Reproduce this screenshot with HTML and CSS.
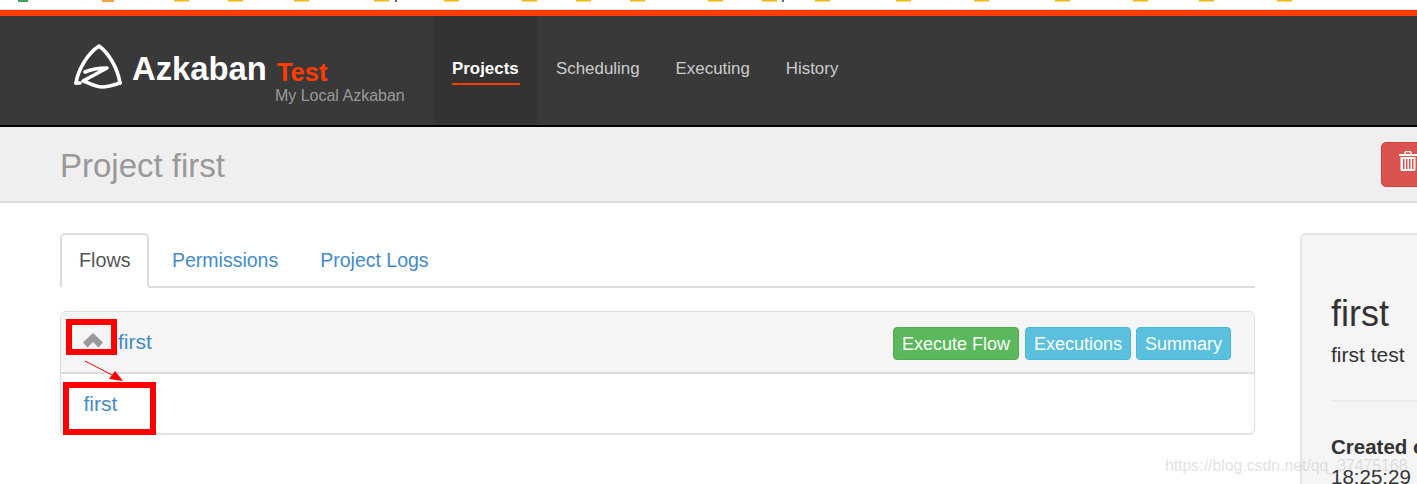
FILE: index.html
```html
<!DOCTYPE html>
<html lang="en">
<head>
<meta charset="utf-8">
<title>Project first</title>
<link rel="stylesheet" href="styles.css">
</head>
<body>
<div class="page">
  <svg class="bookmarks" width="1417" height="10" viewBox="0 0 1417 10" aria-hidden="true">
    <rect x="18" y="0" width="10" height="2" fill="#3fa35a"/>
    <rect x="102" y="0" width="12" height="2" fill="#f5a33c"/>
    <g fill="#f2b911">
      <rect x="174" width="15" height="1.5"/><rect x="228" width="15" height="1.5"/><rect x="294" width="15" height="1.5"/>
      <rect x="374" width="15" height="1.5"/><rect x="444" width="15" height="1.5"/><rect x="522" width="15" height="1.5"/>
      <rect x="576" width="15" height="1.5"/><rect x="630" width="15" height="1.5"/><rect x="708" width="15" height="1.5"/>
      <rect x="762" width="15" height="1.5"/><rect x="815" width="15" height="1.5"/><rect x="896" width="15" height="1.5"/>
      <rect x="974" width="15" height="1.5"/><rect x="1055" width="15" height="1.5"/><rect x="1133" width="15" height="1.5"/>
      <rect x="1199" width="15" height="1.5"/><rect x="1277" width="15" height="1.5"/>
    </g>
    <rect x="395" y="0" width="2" height="2" fill="#667"/>
    <rect x="782" y="0" width="2" height="2" fill="#667"/>
  </svg>

  <header class="navbar">
    <a class="brand">
      <svg class="logo" width="50" height="46" viewBox="0 0 50 46" aria-hidden="true">
        <g fill="none" stroke="#fff" stroke-width="3.600" stroke-linecap="round" stroke-linejoin="round">
          <path d="M2 40 C4 27 13 11 25 3 C36 11 44 27 46 40"/>
          <path d="M11 29 C18 26 26 25 33 25 L9 38 C16 40 20 44 28 44 C34 44 40 42 46 40"/>
          <path d="M2 40 L6 40"/>
        </g>
      </svg>
      <span class="brand-name">Azkaban</span>
      <span class="brand-env">
        <span class="env-name">Test</span>
        <span class="env-sub">My Local Azkaban</span>
      </span>
    </a>
    <nav class="nav">
      <a class="nav-item active"><span>Projects</span></a>
      <a class="nav-item"><span>Scheduling</span></a>
      <a class="nav-item"><span>Executing</span></a>
      <a class="nav-item"><span>History</span></a>
    </nav>
  </header>

  <section class="page-header">
    <h1>Project first</h1>
    <button class="btn-delete" aria-label="Delete project">
      <svg width="18" height="20" viewBox="0 0 18 20" aria-hidden="true">
        <path fill="#fff" d="M6 0h6l1 3h5v2H0V3h5zM7 1.300L6.700 3h4.600L11 1.300z"/>
        <path fill="#fff" fill-rule="evenodd" d="M1.500 6h15v12.500a1.500 1.500 0 0 1-1.500 1.500H3a1.500 1.500 0 0 1-1.500-1.500zM4 8v10h1.500V8zM7 8v10h1.500V8zM10 8v10h1.500V8zM13 8v10h1.500V8z"/>
      </svg>
    </button>
  </section>

  <main class="content">
    <div class="main-col">
      <ul class="tabs">
        <li class="tab active">Flows</li>
        <li class="tab">Permissions</li>
        <li class="tab">Project Logs</li>
      </ul>
      <div class="flow-panel">
        <div class="flow-head">
          <svg class="chevron" width="20" height="15" viewBox="0 0 20 15" aria-hidden="true">
            <path fill="#999" d="M10 0 20 9.500 15.500 14.500 10 9 4.500 14.500 0 9.500z"/>
          </svg>
          <a class="flow-link">first</a>
          <div class="actions">
            <a class="btn green">Execute Flow</a>
            <a class="btn blue">Executions</a>
            <a class="btn blue summary">Summary</a>
          </div>
        </div>
        <div class="flow-body"><a class="flow-link">first</a></div>
      </div>
    </div>
    <aside class="side">
      <h2>first</h2>
      <p class="desc">first test</p>
      <hr>
      <p class="meta"><strong>Created on</strong><br>18:25:29</p>
    </aside>
  </main>

  <div class="mark mark-a"></div>
  <div class="mark mark-b"></div>
  <svg class="arrow" width="44" height="24" viewBox="0 0 44 24" aria-hidden="true">
    <path d="M1 1 30 16" stroke="#f00" stroke-width="1"/>
    <path d="M39 21 25 19 31 11z" fill="#f00"/>
  </svg>
  <div class="watermark">https://blog.csdn.net/qq_37475168</div>
</div>
</body>
</html>
```
FILE: styles.css
```css
* { box-sizing: border-box; }
html, body { margin: 0; height: 484px; overflow: hidden; background: #fff; }
body { font-family: "Liberation Sans", Arial, sans-serif; color: #333; }
.page { position: relative; width: 1417px; height: 484px; overflow: hidden; }

.bookmarks { display: block; }

.navbar {
  display: flex;
  height: 117px;
  padding-left: 60px;
  background: #393939;
  border-top: 6px solid #ff3c00;
  border-bottom: 2px solid #000;
  box-shadow: 0 -1px 0 #e2e2e2;
  position: relative;
}
.brand { display: flex; width: 374px; padding: 27px 0 0 14px; }
.logo { flex: none; margin-right: 8px; }
.brand-name { font-size: 32.800px; font-weight: 700; color: #fff; line-height: 52px; }
.brand-env { display: flex; flex-direction: column; margin-left: 10px; }
.env-name { font-size: 25.500px; font-weight: 700; color: #ff3c00; line-height: 30px; padding-top: 14px; }
.env-sub { font-size: 16px; color: #999; line-height: 20px; margin-left: -2px; margin-top: -1px; white-space: nowrap; }

.nav { display: flex; height: 107px; }
.nav-item {
  display: block;
  padding: 42px 18px 0;
  font-size: 16.900px;
  color: #ccc;
  line-height: 22px;
  white-space: nowrap;
}
.nav-item span { display: block; padding-bottom: 3px; }
.nav-item.active { width: 104px; background: #333; font-weight: 700; color: #fff; }
.nav-item.active span { border-bottom: 2px solid #ff3c00; }

.page-header {
  display: flex;
  align-items: flex-start;
  height: 76px;
  padding: 15px 0 0 60px;
  background: #efefef;
  border-bottom: 2px solid #ddd;
}
.page-header h1 {
  margin: 1px 0 0;
  flex: none;
  width: 1321px;
  font-size: 33px;
  font-weight: 400;
  line-height: 46px;
  color: #999;
}
.btn-delete {
  flex: none;
  width: 60px;
  height: 45px;
  padding: 0 0 5px 17px;
  text-align: left;
  background: #d9534f;
  border: 1px solid #d43f3a;
  border-radius: 5px;
}

.content { display: flex; padding: 30px 0 0 60px; }
.main-col { flex: none; width: 1195px; margin-right: 45px; }

.tabs {
  display: flex;
  list-style: none;
  margin: 0;
  padding: 0;
  height: 55px;
  border-bottom: 2px solid #ddd;
}
.tab {
  padding: 0 18px 0 19px;
  margin-right: 1px;
  font-size: 19.500px;
  line-height: 50px;
  color: #428bca;
  border: 2px solid transparent;
  white-space: nowrap;
}
.tab.active {
  width: 89px;
  padding: 0 0 0 17px;
  margin-right: 2px;
  height: 55px;
  font-size: 19.800px;
  color: #555;
  background: #fff;
  border-color: #ddd;
  border-bottom-color: #fff;
  border-radius: 5px 5px 0 0;
}

.flow-panel {
  margin-top: 23px;
  height: 124px;
  border: 1px solid #ddd;
  border-bottom: 2px solid #e2e2e2;
  border-radius: 6px;
  overflow: hidden;
}
.flow-head {
  display: flex;
  align-items: center;
  height: 62px;
  padding: 0 23px 0 22px;
  background: #f5f5f5;
  border-bottom: 2px solid #ddd;
}
.chevron { flex: none; margin: -4px 15px 0 0; }
.flow-link { font-size: 21px; color: #428bca; line-height: 24px; }
.flow-head .flow-link { margin-top: -1px; }
.actions { display: flex; margin-left: auto; padding-top: 2px; }
.btn {
  display: block;
  height: 33px;
  padding: 0 8px;
  font-size: 18px;
  line-height: 33px;
  color: #fff;
  border: 1px solid;
  border-radius: 4px;
  white-space: nowrap;
}
.btn.green { background: #5cb85c; border-color: #4cae4c; margin-right: 6px; }
.btn.blue { background: #5bc0de; border-color: #46b8da; }
.btn.summary { margin-left: 5px; }
.flow-body { padding: 18px 22.500px; }

.side {
  flex: none;
  width: 200px;
  height: 300px;
  padding: 57px 0 0 29px;
  background: #f5f5f5;
  border: 2px solid #e3e3e3;
  border-radius: 6px;
}
.side h2 { margin: 0; font-size: 36px; font-weight: 400; line-height: 44px; }
.desc { margin: 7px 0 0; font-size: 21px; line-height: 24px; }
.side hr { margin: 33px 0 0; border: 0; border-top: 2px solid #eaeaea; }
.meta { margin: 30px 0 0; font-size: 20.500px; line-height: 30px; white-space: nowrap; }

.mark { position: absolute; border: 6px solid #f00; }
.mark-a { left: 66px; top: 319px; width: 51px; height: 36px; }
.mark-b { left: 63px; top: 382px; width: 93px; height: 53px; }
.arrow { position: absolute; left: 84px; top: 360px; }
.watermark {
  position: absolute;
  left: 1165px;
  top: 456px;
  font-size: 15.800px;
  line-height: 20px;
  color: rgba(190, 190, 190, 0.45);
  white-space: nowrap;
}
```
